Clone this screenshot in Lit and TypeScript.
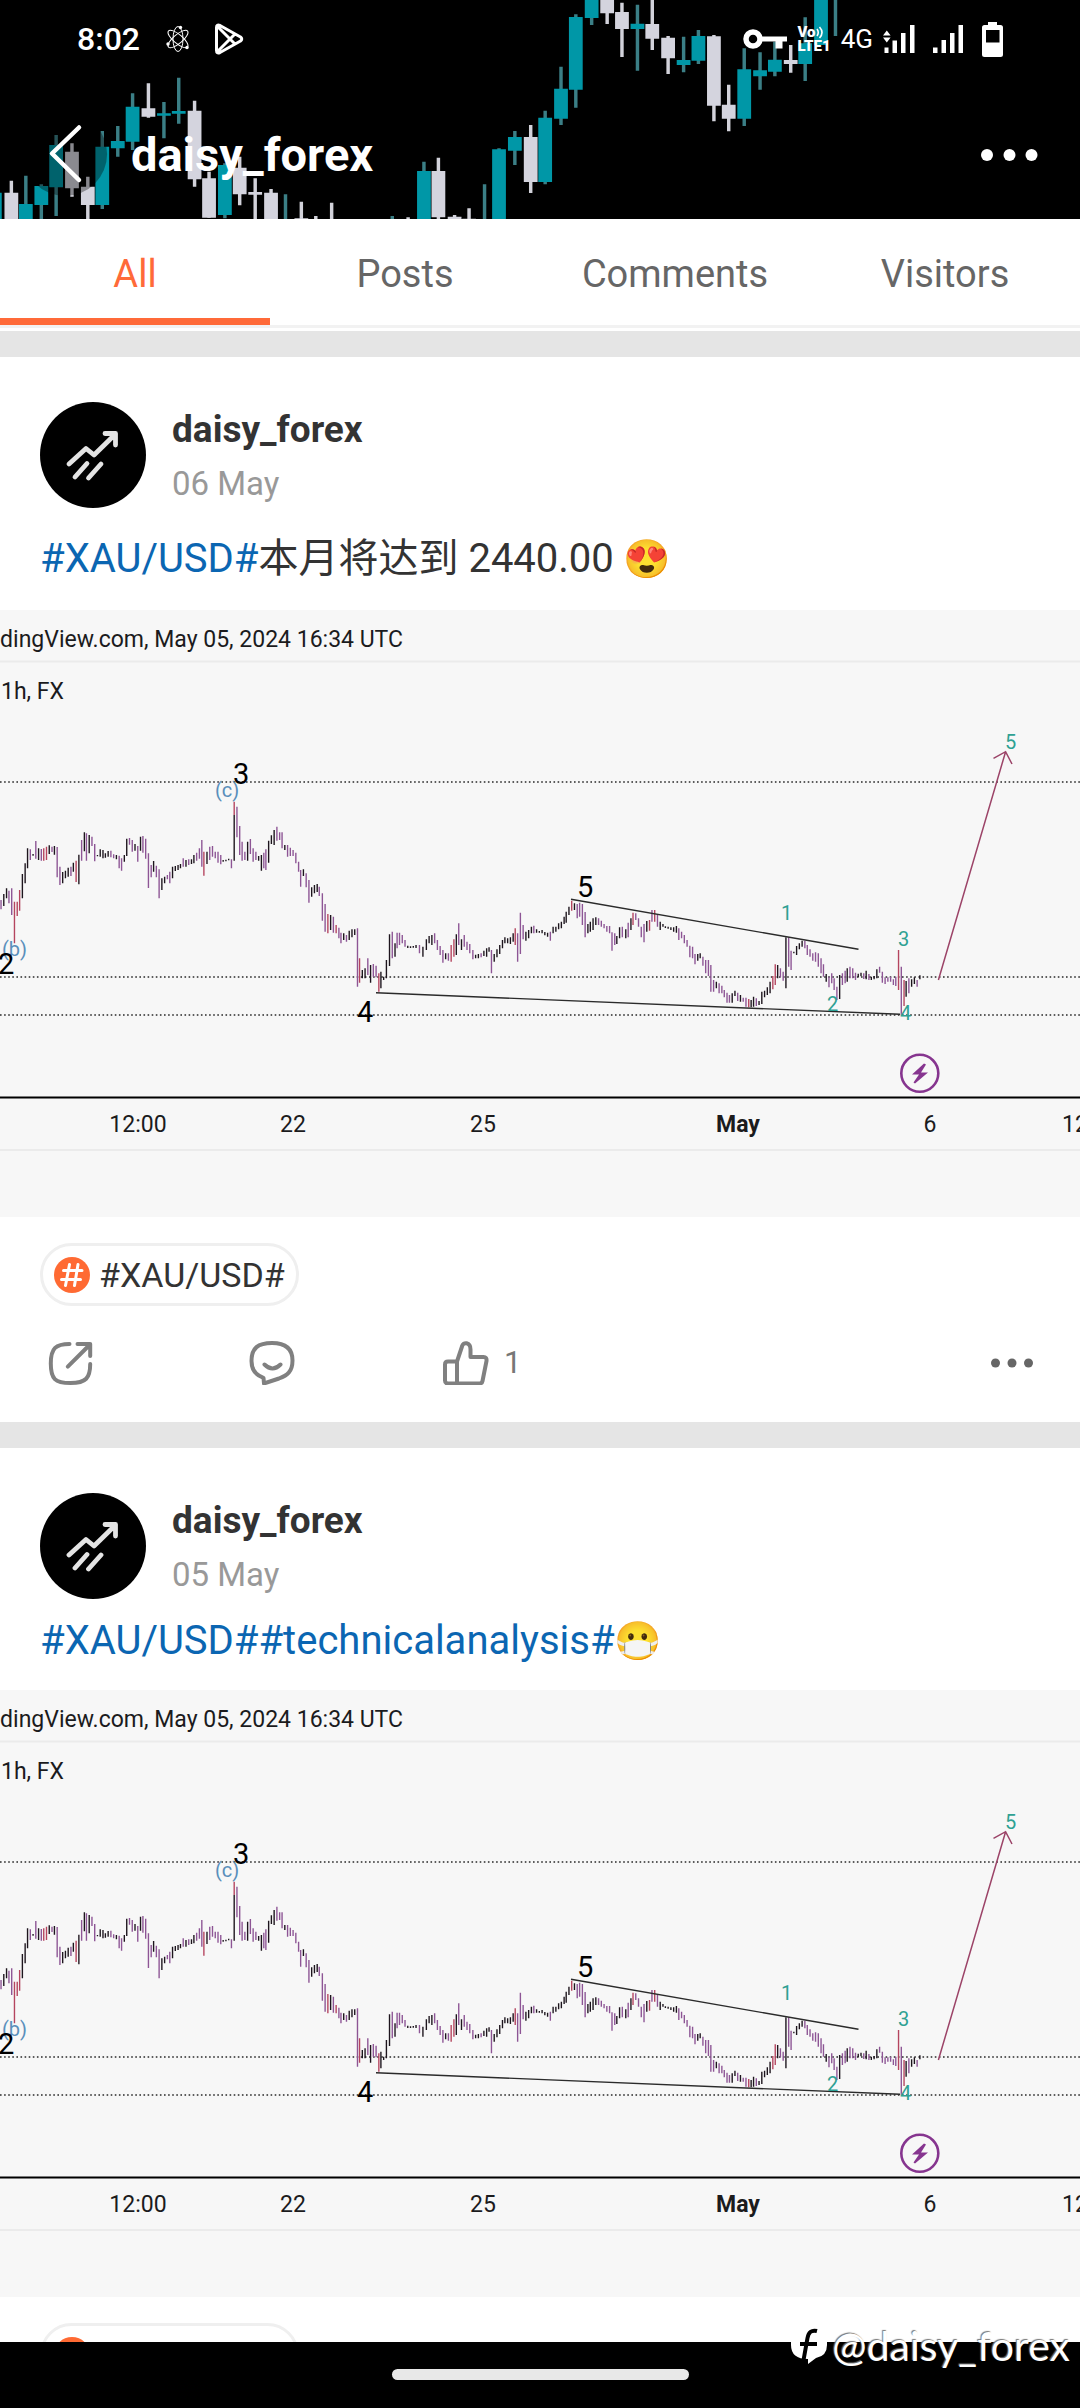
import { LitElement, html, svg, css } from "lit";
import { customElement, property } from "lit/decorators.js";

type Post = { date: string; tags: string[]; body: string; emoji: string; likes: string };

const POSTS: Post[] = [
  { date: "06 May", tags: ["#XAU/USD#"], body: "本月将达到 2440.00 ", emoji: "😍", likes: "1" },
  { date: "05 May", tags: ["#XAU/USD#", "#technicalanalysis#"], body: "", emoji: "😷", likes: "1" },
];

/* Header candles: centre, wick top, body top, body bottom, wick bottom, colour (t = teal, w = white). */
const COVER = `-15 578 578 700 700 t;33 542 578 700 700 w;75 527 612 700 700 t;120 553 558 615 700 t;163 405 435 562 648 t;
209 430 455 565 590 w;255 530 560 615 700 w;297 393 440 615 627 t;342 378 423 445 470 t;385 280 320 425 450 t;
431 250 325 350 353 w;476 306 340 347 415 t;519 233 333 341 371 t;565 302 332 538 560 w;607 515 535 653 653 w;
653 490 495 645 655 t;696 470 503 583 616 w;741 535 576 584 700 w;787 567 578 700 700 w;829 583 700 700 700 t;
875 605 655 700 700 w;917 648 700 700 700 w;963 608 700 700 700 w;1139 648 700 700 700 t;1185 652 700 700 700 w;
1231 485 513 700 700 t;1273 473 513 652 700 w;1320 645 650 700 700 w;1362 625 656 700 700 w;1407 553 700 700 700 t;
1449 445 448 700 700 t;1495 393 411 452 495 t;1541 375 411 546 579 w;1583 332 353 546 553 t;1629 200 266 356 375 t;
1672 43 51 269 323 t;1718 -10 -10 54 75 t;1763 -10 -10 40 72 w;1806 8 36 87 171 w;1851 14 71 87 212 t;
1894 -10 72 116 150 w;1940 108 113 175 222 w;1985 110 180 195 217 t;2028 90 108 182 192 t;2073 105 109 317 364 w;
2116 254 314 356 394 w;2161 145 208 356 378 t;2207 157 211 229 269 t;2250 125 179 215 229 t;2296 135 180 192 218 w;
2338 52 130 192 243 t;2384 -10 -10 135 135 t;2426 -10 -10 -10 108 t`;

/* Price bars: x, high, low, colour (k = black, p = purple, r = red). */
const BARS_A = `3 900 928 p;11 882 918 k;19 865 895 k;26 872 910 p;34 865 945 p;42 905 1030 r;50 905 948 r;57 870 932 r;65 822 895 k;73 790 850 k;
80 745 805 k;88 748 780 p;96 762 767 k;104 723 776 p;112 745 780 k;120 747 782 p;127 745 782 r;135 740 780 r;143 736 762 k;151 740 756 p;
158 738 764 k;166 741 832 p;174 800 855 p;182 816 850 k;190 812 835 k;198 803 830 k;206 800 828 p;213 788 815 k;221 782 846 r;229 764 853 k;
237 720 782 p;245 697 754 k;251 700 782 p;259 705 760 k;267 710 738 p;275 732 784 p;283 765 769 k;291 748 770 k;299 750 775 k;306 760 773 k;
314 753 770 k;322 752 772 p;330 763 775 p;338 765 778 k;346 767 805 p;353 775 812 p;361 765 785 k;368 716 768 k;376 714 734 p;384 720 755 p;
392 732 752 k;400 738 785 p;408 710 752 k;415 708 758 p;423 716 776 p;431 760 864 p;439 795 832 p;446 783 815 k;454 797 832 p;462 808 895 p;
470 835 870 k;478 830 850 k;486 825 838 p;493 815 850 p;501 800 835 k;509 798 813 k;517 795 810 k;524 792 805 k;532 775 800 p;540 780 800 k;
548 778 795 p;556 778 792 k;563 765 790 k;571 758 782 p;579 745 776 p;586 720 800 p;592 755 827 r;601 755 792 k;609 740 780 p;617 738 770 p;
625 755 775 p;633 755 788 p;641 765 793 p;648 780 785 k;656 779 784 k;664 776 781 k;672 778 805 p;680 645 782 k;680 605 645 r;688 620 712 p;
696 678 765 p;703 725 782 p;711 755 780 p;719 725 782 k;727 717 762 p;735 745 785 p;743 755 780 p;751 768 782 k;759 765 812 k;766 758 805 p;
772 748 810 p;780 722 788 k;788 706 732 k;796 690 735 k;804 680 722 p;812 697 720 p;819 697 745 p;827 735 750 k;835 735 770 p;843 743 768 p;
851 750 768 p;859 758 790 p;867 785 815 p;873 810 860 p;881 808 828 k;889 820 862 p;897 840 908 p;905 862 890 k;913 855 880 k;921 852 876 k;
927 860 888 p;936 880 962 p;944 912 995 p;952 942 1000 r;960 945 990 k;968 950 998 p;976 975 1000 r;984 983 1015 p;990 998 1030 p;998 1000 1020 k;
1006 1005 1025 p;1014 992 1020 k;1022 988 1012 k;1030 988 1005 k;1038 985 1160 p;1044 1075 1148 r;1052 1110 1135 k;1060 1105 1135 k;1068 1075 1125 p;
1076 1095 1148 k;1084 1092 1130 p;1092 1097 1132 p;1100 1120 1175 r;1106 1115 1165 k;1114 1130 1140 k;1122 1080 1135 k;1131 1003 1098 k;1139 995 1075 p;
1147 1030 1070 k;1153 998 1045 p;1160 998 1035 p;1168 1005 1030 p;1176 1020 1040 p;1184 1037 1044 k;1192 1039 1044 k;1200 1038 1043 k;1208 1035 1044 k;
1218 1035 1060 p;1228 1040 1070 k;1238 1018 1050 k;1246 1008 1030 k;1254 1005 1035 k;1262 1000 1030 p;1270 1020 1050 p;1278 1038 1065 p;1286 1050 1088 p;
1294 1060 1078 k;1302 1060 1082 p;1310 1035 1085 r;1318 1018 1070 r;1325 1003 1065 k;1332 970 1035 p;1340 1018 1050 k;1348 1005 1040 p;1356 1025 1050 p;
1364 1032 1060 p;1373 1050 1078 p;1381 1064 1075 k;1389 1062 1075 k;1397 1060 1072 p;1405 1052 1068 k;1413 1045 1070 k;1420 1042 1055 k;1427 1050 1120 p;
1435 1062 1085 k;1443 1048 1072 k;1451 1035 1062 k;1459 1020 1045 k;1466 1012 1030 k;1474 1015 1030 k;1482 1012 1032 k;1490 1000 1025 k;1496 985 1035 r;
1503 1000 1085 p;1511 938 1062 p;1519 975 1018 p;1527 995 1022 k;1535 990 1015 k;1543 980 1000 k;1550 977 1000 p;1558 988 998 k;1566 993 998 k`;

const BARS_B = `6 690 700 k;14 696 706 k;22 698 710 k;30 695 722 p;38 680 700 k;46 680 695 k;54 670 688 k;62 665 685 k;70 650 672 k;76 635 668 k;
84 620 645 k;92 602 632 r;100 610 630 k;108 612 655 p;115 608 650 p;123 612 675 p;131 636 712 p;139 672 700 k;146 665 695 k;154 655 690 k;
162 652 675 k;170 655 675 p;178 662 680 p;186 672 685 p;194 678 695 p;202 678 700 p;209 697 752 p;217 700 735 p;223 708 732 k;231 682 715 k;
239 680 712 p;249 688 715 k;256 668 712 p;264 655 690 k;270 638 675 r;278 640 660 p;286 655 680 p;294 680 712 p;302 672 727 p;310 663 695 k;
318 660 692 r;325 630 665 p;333 630 665 r;341 645 680 p;349 665 690 k;357 672 680 k;364 679 684 k;372 680 686 k;380 682 690 k;388 682 695 k;
396 678 698 k;403 685 720 p;411 695 715 p;419 705 730 p;427 720 740 p;435 737 772 p;443 740 775 p;450 762 793 p;458 762 782 k;465 760 775 k;
473 770 797 p;481 780 820 p;489 780 828 p;496 795 875 p;504 840 875 p;512 845 865 k;520 850 880 p;528 857 880 p;535 870 892 p;543 878 908 p;
550 885 908 p;558 880 908 k;566 872 888 k;574 878 903 p;582 885 905 k;590 893 905 p;598 893 920 p;606 897 922 r;613 900 922 k;620 890 920 k;
628 895 918 p;636 903 915 k;644 875 912 k;652 872 892 k;660 862 885 k;668 845 880 k;676 828 868 r;683 793 855 r;690 795 835 k;698 805 832 p;
706 815 842 p;714 712 865 k;722 712 800 p;729 752 810 p;737 755 760 k;745 738 765 k;753 730 748 k;761 722 740 k;769 722 745 p;776 735 765 p;
784 748 770 p;792 760 782 p;800 757 785 p;808 760 800 p;816 775 820 p;823 793 830 p;831 822 845 k;839 830 862 p;847 820 850 p;854 835 870 p;
862 860 900 p;870 825 897 k;878 820 855 p;886 812 850 p;892 805 845 k;900 800 835 p;908 805 835 p;916 818 840 p;924 821 832 k;932 818 829 k;
940 820 837 p;947 812 838 k;955 822 840 p;962 830 840 k;970 828 838 k;978 808 835 k;986 800 818 p;994 815 848 p;1002 832 852 p;1010 832 845 p;
1018 830 845 p;1026 838 855 p;1033 830 858 p;1041 750 870 r;1049 800 945 p;1057 840 918 r;1063 843 890 k;1071 835 880 p;1079 838 860 k;
1087 832 852 k;1095 840 860 p;1103 826 838 k`;

const rows = (data: string) => data.split(";").map((row) => row.trim().split(" "));

const barPath = (color: string) => {
  const piece = (data: string, dx: number, dy: number) =>
    rows(data)
      .filter((r) => r[3] === color)
      .map(([x, top, low]) => `M${+x + dx} ${+top + dy}V${+low + dy}`)
      .join("");
  return piece(BARS_A, 0, 0) + piece(BARS_B, 1568, 300);
};
const BAR_PATHS = { k: barPath("k"), p: barPath("p"), r: barPath("r") };

const coverPath = (color: string, part: "wick" | "body") =>
  rows(COVER)
    .filter((r) => r[5] === color)
    .map(([x, high, top, bottom, low]) =>
      part === "wick" ? `M${x} ${high}V${low}` : `M${+x - 20} ${top}h40V${bottom}h-40Z`,
    )
    .join("");

@customElement("price-chart")
class PriceChart extends LitElement {
  static styles = css`
    :host { display: block; background: #f7f7f7; }
    svg { display: block; width: 100%; height: auto; font-family: Roboto, "Liberation Sans", sans-serif; }
    .small { font-size: 23px; fill: #1b1b1d; }
    .mid { text-anchor: middle; }
    .end { text-anchor: end; }
    .strong { font-weight: 700; }
    .wave { font-size: 29px; fill: #000; }
    .sub { font-size: 20px; fill: #5a8fbb; }
    .teal { font-size: 20px; fill: #2fa193; }
    .k { stroke: #1d151d; stroke-width: 4; }
    .p { stroke: #8d5595; stroke-width: 4; }
    .r { stroke: #b5455f; stroke-width: 4; }
    .level { stroke: #2a2a2a; stroke-width: 1.6; stroke-dasharray: 1.6 2.5; }
    .rule { stroke: #ebebeb; stroke-width: 2; }
    .trend { stroke: #2b2b2b; stroke-width: 1.4; }
    .arrow { stroke: #9c4468; stroke-width: 1.5; fill: none; }
    .event { stroke: #86358f; stroke-width: 2.6; fill: none; }
    .bolt { fill: #86358f; }
  `;

  render() {
    return html`<svg viewBox="0 0 1080 607" role="img" aria-label="XAU/USD 1h">
      <path class="rule" d="M0 51.5H1080M0 540H1080" />
      <text class="small end" x="403" y="37">adingView.com, May 05, 2024 16:34 UTC</text>
      <text class="small" x="1" y="89">1h, FX</text>
      <path class="level" d="M0 172H1080M0 367H1080M0 405H1080" />
      <g fill="none" transform="scale(.3444 .3333) translate(0 -30)">
        <path class="p" d=${BAR_PATHS.p} />
        <path class="r" d=${BAR_PATHS.r} />
        <path class="k" d=${BAR_PATHS.k} />
      </g>
      <path class="trend" d="M571 289.3L858.5 339.3M376 382.7L900 404.3" />
      <path class="arrow" d="M938.4 370L1005.6 141.7M993.5 148.3L1005.6 141.7L1012 154" />
      ${[
        ["sub", 215, 187, "(c)"], ["sub", 2, 346, "(b)"],
        ["wave", 233, 174, "3"], ["wave", -2, 364, "2"], ["wave", 357, 412, "4"], ["wave", 577, 287, "5"],
        ["teal", 781, 310, "1"], ["teal", 827, 401, "2"], ["teal", 898, 336, "3"],
        ["teal", 900, 410, "4"], ["teal", 1005, 139, "5"],
      ].map(([kind, x, y, label]) => svg`<text class=${kind} x=${x} y=${y}>${label}</text>`)}
      <circle class="event" cx="919.8" cy="463.3" r="18.5" />
      <path class="bolt" d="M924 453.5L912 464.5H919L913.5 472.5L915 473.5L928 462.5H921L926 454.5Z" />
      <path stroke="#000" stroke-width="2" d="M0 487.5H1080" />
      <text class="small mid" x="138" y="522">12:00</text>
      <text class="small mid" x="293" y="522">22</text>
      <text class="small mid" x="483" y="522">25</text>
      <text class="small mid strong" x="738" y="522">May</text>
      <text class="small mid" x="930" y="522">6</text>
      <text class="small" x="1062" y="522">12</text>
    </svg>`;
  }
}

@customElement("feed-post")
class FeedPost extends LitElement {
  @property({ attribute: false }) post!: Post;

  static styles = css`
    :host { display: block; background: #fff; padding: 45px 0 37px; border-bottom: 26px solid #e5e5e5; }
    .author { display: flex; align-items: center; gap: 26px; padding: 0 40px; }
    .avatar { width: 106px; height: 106px; flex: none; }
    .who { display: flex; flex-direction: column; gap: 12px; }
    .name { font-size: 37px; line-height: 44px; font-weight: 700; color: #333; }
    .date { font-size: 33px; line-height: 39px; color: #999; }
    .text {
      margin: 18px 40px 26px; font-size: 40px; line-height: normal; color: #333;
      font-family: Roboto, "Noto Sans CJK SC", "Noto Color Emoji", sans-serif;
    }
    .text a { color: #0b66b2; text-decoration: none; }
    .emoji { line-height: 0; font-size: 38px; }
    .tag {
      display: inline-flex; align-items: center; gap: 9px; margin: 26px 40px 0; height: 63px; box-sizing: border-box;
      padding: 0 11px; border: 3px solid #efefef; border-radius: 32px; color: #333; text-decoration: none; font-size: 34px;
    }
    .hash { width: 36px; height: 36px; }
    .actions { display: grid; grid-template-columns: 200px 192px 1fr auto; align-items: center; padding: 35px 47px 0 48px; }
    button {
      display: flex; align-items: center; gap: 15px; padding: 0; border: 0; background: none;
      font: inherit; font-size: 31px; line-height: 44px; color: #777;
    }
    button svg { height: 44px; fill: none; stroke: #808080; stroke-width: 4; stroke-linecap: round; stroke-linejoin: round; }
  `;

  render() {
    const p = this.post;
    return html`
      <div class="author">
        <svg class="avatar" viewBox="0 0 106 106">
          <circle cx="53" cy="53" r="53" fill="#000" />
          <path d="M29 62L46 46.5L54 53L75 32.500M65 31.500H75.500V43M35 75L47 61.500M48.500 76L61 62" fill="none" stroke="#e4e4e4" stroke-width="4.800" stroke-linecap="round" stroke-linejoin="round" />
        </svg>
        <div class="who">
          <span class="name">daisy_forex</span>
          <span class="date">${p.date}</span>
        </div>
      </div>
      <div class="text">${p.tags.map((t) => html`<a href="#topic">${t}</a>`)}${p.body}<span class="emoji">${p.emoji}</span></div>
      <price-chart></price-chart>
      <a class="tag" href="#topic">
        <svg class="hash" viewBox="0 0 36 36">
          <circle cx="18" cy="18" r="18" fill="#ff6a33" />
          <path d="M9.500 13.500H28M7.500 22.500H26.500M15.500 7.500L11.500 28.500M24 7.500L20.500 28.500" stroke="#fff" stroke-width="3" stroke-linecap="round" />
        </svg>
        <span>#XAU/USD#</span>
      </a>
      <div class="actions">
        <button aria-label="Share">
          <svg width="46" viewBox="0 0 46 44"><path d="M21.500 3C8 3 2.800 7 2.800 22.500C2.800 38 7 42 22.500 42C38 42 42.200 37 42.200 23M29.500 3H42.200V15M19.800 25.700L41.500 4" /></svg>
        </button>
        <button aria-label="Comment">
          <svg width="48" viewBox="0 0 48 44"><path d="M16 42.500L15.500 36.800C7 34 3.500 28 3.500 20C3.500 7 10 2 24 2S44.500 8 44.500 19.500C44.500 31 39 34.500 31 37.500ZM16.500 23.500Q24.500 31.500 32.500 23.500" /></svg>
        </button>
        <button aria-label="Like">
          <svg width="49" viewBox="-3 0 49 44"><path d="M14 20.500H5Q2 20.500 2 23.500V39.500Q2 42.500 5 42.500H36.500Q39 42.500 39.500 40L43.500 20Q44 16 40.500 16H27.500V8.500C27.500 1 20 .5 19 5.500L14 20.500V42.500" /></svg>
          <span>${p.likes}</span>
        </button>
        <button aria-label="More">
          <svg width="42" viewBox="0 0 42 44"><g fill="#666" stroke="none"><circle cx="4.500" cy="22" r="4.500" /><circle cx="21" cy="22" r="4.500" /><circle cx="37.500" cy="22" r="4.500" /></g></svg>
        </button>
      </div>`;
  }
}

@customElement("app-root")
class AppRoot extends LitElement {
  static styles = css`
    :host {
      position: relative; display: flex; flex-direction: column; height: 100vh; overflow: hidden; background: #fff;
      font-family: Roboto, "Liberation Sans", "Noto Sans CJK SC", sans-serif;
    }
    header { position: relative; flex: none; background: #000; color: #fff; overflow: hidden; }
    .cover { position: absolute; inset: 0; width: 100%; height: 100%; }
    .status { position: relative; display: flex; align-items: center; height: 78px; padding: 0 77px; }
    .status svg { flex: none; }
    .clock { font-size: 32px; font-weight: 500; margin-right: 26px; }
    .play { margin-left: 24px; }
    .radio { display: flex; align-items: center; gap: 18px; margin-left: auto; }
    .net { display: flex; align-items: center; gap: 10px; }
    .volte { display: flex; flex-direction: column; font-size: 15px; line-height: 14px; font-weight: 900; }
    .vo { display: flex; align-items: center; }
    .gen { font-size: 26px; }
    .bar { position: relative; display: flex; align-items: center; height: 128px; margin-top: 13px; padding: 0 42px 0 24px; }
    .bar button { display: flex; padding: 0; border: 0; background: none; }
    .back { border-radius: 50%; }
    h1 { flex: 1; margin: 0 0 0 25px; font-size: 47px; line-height: 54px; font-weight: 700; }
    nav { display: grid; grid-template-columns: repeat(4, 1fr); flex: none; border-bottom: 3px solid #f2f2f2; }
    nav a {
      padding: 32px 0 21px; border-bottom: 7px solid transparent; font-size: 38px; line-height: 46px;
      text-align: center; text-decoration: none; color: #666;
    }
    nav a.on { color: #ff6a39; border-color: #ff6a39; }
    main { flex: 1; min-height: 0; overflow: hidden; margin-top: 3px; border-top: 26px solid #e5e5e5; }
    .home { position: relative; flex: none; display: flex; justify-content: center; padding: 27px 0 28px; background: #000; }
    .pill { width: 27.5%; height: 11px; border-radius: 6px; background: #e8e8e8; }
    .mark { position: absolute; right: 10px; bottom: 38px; display: flex; align-items: center; gap: 4px; color: #fff; }
    .mark span { font-family: Lato, sans-serif; font-size: 41px; line-height: 48px; text-shadow: -1px -1px 1px #777; }
  `;

  render() {
    return html`
      <header>
        <svg class="cover" viewBox="0 0 3136 657" preserveAspectRatio="none" aria-hidden="true">
          <path d=${coverPath("t", "wick")} stroke="#3b7f86" stroke-width="10" />
          <path d=${coverPath("w", "wick")} stroke="#d2d2da" stroke-width="10" />
          <path d=${coverPath("t", "body")} fill="#0097a7" />
          <path d=${coverPath("w", "body")} fill="#d4d4de" />
          <ellipse cx="189" cy="462" rx="122" ry="126" fill="#000" fill-opacity=".35" />
        </svg>
        <div class="status">
          <span class="clock">8:02</span>
          <svg width="24" height="28" viewBox="0 0 24 28" fill="none" stroke="#fff" stroke-width="1">
            <ellipse cx="12" cy="14" rx="5" ry="12.500" />
            <ellipse cx="12" cy="14" rx="4.500" ry="12.500" transform="rotate(50 12 14)" />
            <ellipse cx="12" cy="14" rx="4.500" ry="12.500" transform="rotate(-50 12 14)" />
            <g fill="#fff" stroke="none"><circle cx="14.500" cy="2.500" r="1.700" /><circle cx="2" cy="19" r="1.700" /><circle cx="21" cy="22.500" r="1.700" /></g>
          </svg>
          <svg class="play" width="30" height="32" viewBox="0 0 30 32" fill="none" stroke="#fff" stroke-width="3" stroke-linejoin="round">
            <path d="M2.500 4.500Q2.500 1 6 2.500L26.500 14Q29 16 26.500 18L6 29.500Q2.500 31 2.500 27.500ZM3.500 3.500L21.500 21.500M3.500 28.500L21.500 10.500" />
          </svg>
          <div class="radio">
            <div class="net">
              <svg width="44" height="20" viewBox="0 0 44 20" fill="#fff">
                <circle cx="10" cy="10" r="7" fill="none" stroke="#fff" stroke-width="5.500" />
                <path d="M18 7.500H44V12.500H39.500V19.500H32.500V12.500H18Z" />
              </svg>
              <div class="volte">
                <span class="vo">Vo<svg width="8" height="13" viewBox="0 0 8 13" fill="none" stroke="#fff" stroke-width="1.600"><path d="M1 3Q3.500 6.500 1 10M3.500 1Q8.500 6.500 3.500 12" /></svg></span>
                <span>LTE1</span>
              </div>
              <span class="gen">4G</span>
              <svg width="32" height="28" viewBox="0 0 32 28" fill="#fff">
                <path d="M0 10.500L3.800 5.500L7.600 10.500ZM0 12.500L3.800 17.500L7.600 12.500ZM1.500 22.500h4V28h-4ZM9.500 15.500h4.500V28H9.500ZM18 8h4.500V28H18ZM27 0h4.500V28H27Z" />
              </svg>
            </div>
            <svg width="31" height="28" viewBox="0 0 31 28" fill="#fff">
              <path d="M0 22.500h4.500V28H0ZM8.500 15h4.500V28H8.500ZM17 8h4.500V28H17ZM25.500 0h4.500V28H25.500Z" />
            </svg>
            <svg width="21" height="35" viewBox="0 0 21 35" fill="#fff" fill-rule="evenodd">
              <path d="M6 0H15V3H18.500Q21 3 21 5.500V32.500Q21 35 18.500 35H2.500Q0 35 0 32.500V5.500Q0 3 2.500 3H6ZM4 8H17.500V20.500H4Z" />
            </svg>
          </div>
        </div>
        <div class="bar">
          <button class="back" aria-label="Back">
            <svg width="82" height="82" viewBox="0 0 82 82" fill="none" stroke="#fff" stroke-width="4.500" stroke-linecap="round" stroke-linejoin="round"><path d="M55 13.500L28 39.500L55 66" /></svg>
          </button>
          <h1>daisy_forex</h1>
          <button aria-label="More">
            <svg width="58" height="16" viewBox="0 0 58 16" fill="#fff"><circle cx="7" cy="8" r="6" /><circle cx="29.500" cy="8" r="6" /><circle cx="51.500" cy="8" r="6" /></svg>
          </button>
        </div>
      </header>
      <nav>
        <a class="on" href="#all">All</a>
        <a href="#posts">Posts</a>
        <a href="#comments">Comments</a>
        <a href="#visitors">Visitors</a>
      </nav>
      <main>${POSTS.map((p) => html`<feed-post .post=${p}></feed-post>`)}</main>
      <div class="home"><div class="pill"></div></div>
      <div class="mark">
        <svg width="38" height="38" viewBox="0 0 38 38">
          <path d="M8 1H30Q37 1 37 8V18Q37 29 26 31L18 37V32Q1 32 1 18V8Q1 1 8 1Z" fill="#fff" />
          <path d="M27 4Q19 2 17.500 11L13 36M10 17H27" fill="none" stroke="#000" stroke-width="4" />
        </svg>
        <span>@daisy_forex</span>
      </div>`;
  }
}
